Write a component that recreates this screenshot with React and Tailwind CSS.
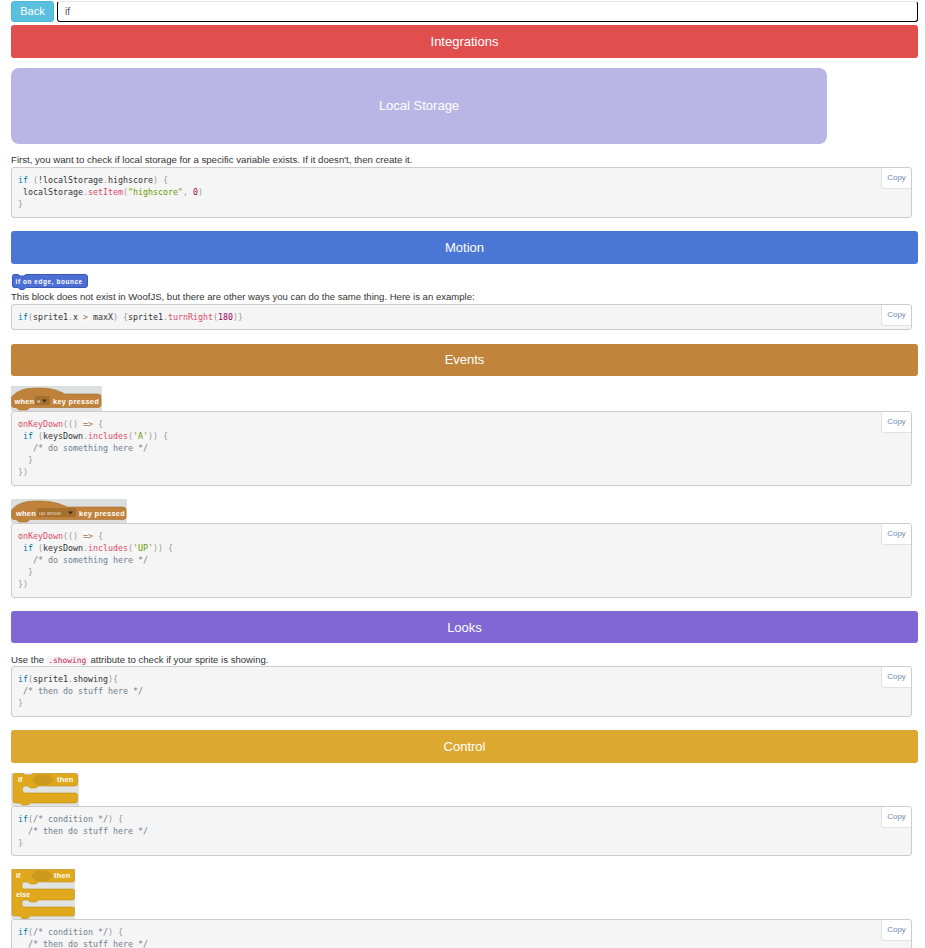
import React from 'react'

const K = ({ children }) => <span className="text-[#0077aa]">{children}</span>
const P = ({ children }) => <span className="text-[#999999]">{children}</span>
const F = ({ children }) => <span className="text-[#dd4a68]">{children}</span>
const S = ({ children }) => <span className="text-[#669900]">{children}</span>
const N = ({ children }) => <span className="text-[#990055]">{children}</span>
const C = ({ children }) => <span className="text-[#708090]">{children}</span>
const O = ({ children }) => <span className="bg-white/50 text-[#9a6e3a]">{children}</span>

function Bar({ color, className = '', children }) {
  return (
    <div className={`flex h-[33px] w-[907px] items-center justify-center rounded-[3px] text-[13px] text-white ${color} ${className}`}>
      {children}
    </div>
  )
}

function Code({ className = '', children }) {
  return (
    <div className={`relative w-[901px] rounded-[3px] border border-[#cccccc] bg-[#f5f5f5] ${className}`}>
      <pre className="px-[6px] py-[5.5px] font-['DejaVu_Sans_Mono',monospace] text-[8.3px] leading-[12px] text-[#333333]">{children}</pre>
      <button className="absolute top-0 right-0 flex h-[21px] w-[30px] items-center justify-center rounded-bl-[3px] rounded-tr-[3px] border-b border-l border-[#e1e1e8] bg-white text-[8px] text-[#6f8bb0]">
        Copy
      </button>
    </div>
  )
}

function Para({ className = '', children }) {
  return <p className={`text-[9.6px] leading-[13px] text-[#333333] ${className}`}>{children}</p>
}

function BounceBlock() {
  return (
    <svg width="76" height="16" viewBox="0 0 76 16" className="ml-px block">
      <path d="M2 0.5H6L8 2H12L14 0.5H73Q75.5 0.5 75.5 3V11Q75.5 13.5 73 13.5H14L12 15.5H8L6 13.5H2Q0.5 13.5 0.5 11V3Q0.5 0.5 2 0.5Z" fill="#4c6fd6" stroke="#3a58b4" strokeWidth="1" />
      <text x="3.5" y="9.7" fontSize="6.4" fontWeight="700" fill="#ffffff" letterSpacing="0.6" className="font-['Liberation_Sans',sans-serif]">if on edge, bounce</text>
    </svg>
  )
}

function KeyBlock({ width, height = 25, menu, textX, textY = 18, menuX, menuWidth, menuSize, arcEnd }) {
  const right = width - 1
  const base = height - 3.5
  return (
    <svg width={width} height={height} viewBox={`0 0 ${width} ${height}`} className="block">
      <rect width={width} height={height} fill="#dcdfdf" />
      <path d={`M0.5 11C8 2.5 18 2 28 2C40 2 ${arcEnd - 8} 4 ${arcEnd} 8H${right - 3}Q${right} 8 ${right} 11V${base - 2.5}Q${right} ${base} ${right - 3} ${base}H19L16 ${base + 2.5}H8L5 ${base}H3Q0.5 ${base} 0.5 ${base - 2.5}Z`} fill="#c0823a" stroke="#a66f2e" strokeWidth="0.6" />
      <text x={textX} y={textY} fontSize="7.4" fontWeight="700" fill="#ffffff" letterSpacing="0.3" className="font-['Liberation_Sans',sans-serif]">when</text>
      <rect x={menuX} y={textY - 8} width={menuWidth} height="9" rx="1" fill="#a56f2e" />
      <text x={menuX + 2} y={textY - 1} fontSize={menuSize} fill="#e9d6bd" className="font-['Liberation_Sans',sans-serif]">{menu}</text>
      <path d={`M${menuX + menuWidth - 8} ${textY - 4.5}H${menuX + menuWidth - 3}L${menuX + menuWidth - 5.5} ${textY - 1.5}Z`} fill="#3d2a12" />
      <text x={menuX + menuWidth + 3} y={textY} fontSize="7.4" fontWeight="700" fill="#ffffff" letterSpacing="0.3" className="font-['Liberation_Sans',sans-serif]">key pressed</text>
    </svg>
  )
}

function IfBlock() {
  return (
    <svg width="68" height="33" viewBox="0 0 68 33" className="block">
      <rect width="68" height="33" fill="#e1e3e3" />
      <path d="M4 0.5H12L14 2H20L22 0.5H64Q66.5 0.5 66.5 3V10.5Q66.5 13 64 13H27L25 15H19L17 13H14Q11.5 13 11.5 15.5V17.5Q11.5 20 14 20H64Q66.5 20 66.5 22.5V27.5Q66.5 30 64 30H19L17 32H11L9 30H4Q2 30 2 27.5V3Q2 0.5 4 0.5Z" fill="#e0a81c" stroke="#c08f15" strokeWidth="0.6" />
      <path d="M21 6.5L26 1.5H38L43 6.5L38 12H26Z" fill="#cc9a1c" />
      <text x="7" y="9" fontSize="7" fontWeight="700" fill="#ffffff" className="font-['Liberation_Sans',sans-serif]">if</text>
      <text x="46" y="9" fontSize="7.4" fontWeight="700" fill="#ffffff" letterSpacing="0.2" className="font-['Liberation_Sans',sans-serif]">then</text>
    </svg>
  )
}

function IfElseBlock() {
  return (
    <svg width="64" height="50" viewBox="0 0 64 50" className="block">
      <rect width="64" height="50" fill="#e1e3e3" />
      <path d="M1 0.5H63.5V11Q63.5 13 61.5 13H27L25 15H19L17 13H13Q11 13 11 15V18Q11 20 13 20H61.5Q63.5 20 63.5 22V29Q63.5 31 61.5 31H27L25 33H19L17 31H13Q11 31 11 33V36Q11 38 13 38H61.5Q63.5 38 63.5 40V45Q63.5 47 61.5 47H19L17 49.5H11L9 47H3Q1 47 1 45Z" fill="#e0a81c" stroke="#c08f15" strokeWidth="0.6" />
      <path d="M20 6.5L25 1.5H37L42 6.5L37 12H25Z" fill="#cc9a1c" />
      <text x="5" y="9" fontSize="7" fontWeight="700" fill="#ffffff" className="font-['Liberation_Sans',sans-serif]">if</text>
      <text x="43" y="9" fontSize="7.4" fontWeight="700" fill="#ffffff" letterSpacing="0.2" className="font-['Liberation_Sans',sans-serif]">then</text>
      <text x="5" y="28" fontSize="7" fontWeight="700" fill="#ffffff" letterSpacing="0.2" className="font-['Liberation_Sans',sans-serif]">else</text>
    </svg>
  )
}

export default function App() {
  return (
    <div className="h-[948px] overflow-hidden bg-white pl-[11px] font-['Liberation_Sans',Arial,sans-serif]">
      <div className="flex h-[25px] w-[907px] gap-[3px] pt-[1px]">
        <button className="h-[21px] w-[43px] rounded-[3px] border border-[#46b8da] bg-[#5bc0de] text-[11px] text-white">Back</button>
        <input
          readOnly
          value="if"
          className="h-[21px] flex-1 rounded-[3px] border border-black border-t-[#e8e8e8] bg-white px-[7px] text-[10px] text-[#555555] outline-none"
        />
      </div>

      <Bar color="bg-[#e04e4e]">Integrations</Bar>
      <div className="mt-[10px] flex h-[76px] w-[816px] items-center justify-center rounded-[8px] bg-[#b9b6e6] text-[13px] text-white">
        Local Storage
      </div>
      <Para className="mt-[9px] h-[14px] !text-[9.65px] leading-[14px]">First, you want to check if local storage for a specific variable exists. If it doesn't, then create it.</Para>
      <Code className="h-[51px]">
        <K>if</K> <P>(</P>!localStorage<P>.</P>highscore<P>)</P> <P>{'{'}</P>{'\n'}
        {' '}localStorage<P>.</P><F>setItem</F><P>(</P><S>"highscore"</S><P>,</P> <N>0</N><P>)</P>{'\n'}
        <P>{'}'}</P>
      </Code>

      <Bar color="bg-[#4a76d6]" className="mt-[13px]">Motion</Bar>
      <div className="mt-[10px]"><BounceBlock /></div>
      <Para className="h-[14px] !text-[9.55px] leading-[14px]">This block does not exist in WoofJS, but there are other ways you can do the same thing. Here is an example:</Para>
      <Code className="h-[26px]">
        <K>if</K><P>(</P>sprite1<P>.</P>x <O>{'>'}</O> maxX<P>)</P> <P>{'{'}</P>sprite1<P>.</P><F>turnRight</F><P>(</P><N>180</N><P>)</P><P>{'}'}</P>
      </Code>

      <Bar color="bg-[#c1843c]" className="mt-[14px] !h-[32px]">Events</Bar>
      <div className="mt-[10px]"><KeyBlock width={91} menu="a" textX={3.5} menuX={24} menuWidth={15} menuSize={6} arcEnd={54} /></div>
      <Code className="h-[75px]">
        <F>onKeyDown</F><P>(</P><P>(</P><P>)</P> <O>=&gt;</O> <P>{'{'}</P>{'\n'}
        {' '}<K>if</K> <P>(</P>keysDown<P>.</P><F>includes</F><P>(</P><S>'A'</S><P>)</P><P>)</P> <P>{'{'}</P>{'\n'}
        {'   '}<C>/* do something here */</C>{'\n'}
        {'  '}<P>{'}'}</P>{'\n'}
        <P>{'}'}</P><P>)</P>
      </Code>
      <div className="mt-[13px]"><KeyBlock width={116} height={24} menu="up arrow" textX={5} textY={17} menuX={26} menuWidth={39} menuSize={5.6} arcEnd={56} /></div>
      <Code className="h-[75px]">
        <F>onKeyDown</F><P>(</P><P>(</P><P>)</P> <O>=&gt;</O> <P>{'{'}</P>{'\n'}
        {' '}<K>if</K> <P>(</P>keysDown<P>.</P><F>includes</F><P>(</P><S>'UP'</S><P>)</P><P>)</P> <P>{'{'}</P>{'\n'}
        {'   '}<C>/* do something here */</C>{'\n'}
        {'  '}<P>{'}'}</P>{'\n'}
        <P>{'}'}</P><P>)</P>
      </Code>

      <Bar color="bg-[#8067d4]" className="mt-[13px] !h-[32px] pt-px">Looks</Bar>
      <Para className="mt-[10px] h-[13px] whitespace-nowrap">
        Use the <code className="rounded-[2px] bg-[#f9f2f4] px-[1.5px] font-['DejaVu_Sans_Mono',monospace] text-[7.9px] text-[#c7254e]">.showing</code> attribute to check if your sprite is showing.
      </Para>
      <Code className="h-[51px]">
        <K>if</K><P>(</P>sprite1<P>.</P>showing<P>)</P><P>{'{'}</P>{'\n'}
        {' '}<C>/* then do stuff here */</C>{'\n'}
        <P>{'}'}</P>
      </Code>

      <Bar color="bg-[#dca830]" className="mt-[13px]">Control</Bar>
      <div className="mt-[10px]"><IfBlock /></div>
      <Code className="h-[50px]">
        <K>if</K><P>(</P><C>/* condition */</C><P>)</P> <P>{'{'}</P>{'\n'}
        {'  '}<C>/* then do stuff here */</C>{'\n'}
        <P>{'}'}</P>
      </Code>
      <div className="mt-[13px]"><IfElseBlock /></div>
      <Code className="h-[75px]">
        <K>if</K><P>(</P><C>/* condition */</C><P>)</P> <P>{'{'}</P>{'\n'}
        {'  '}<C>/* then do stuff here */</C>
      </Code>
    </div>
  )
}
